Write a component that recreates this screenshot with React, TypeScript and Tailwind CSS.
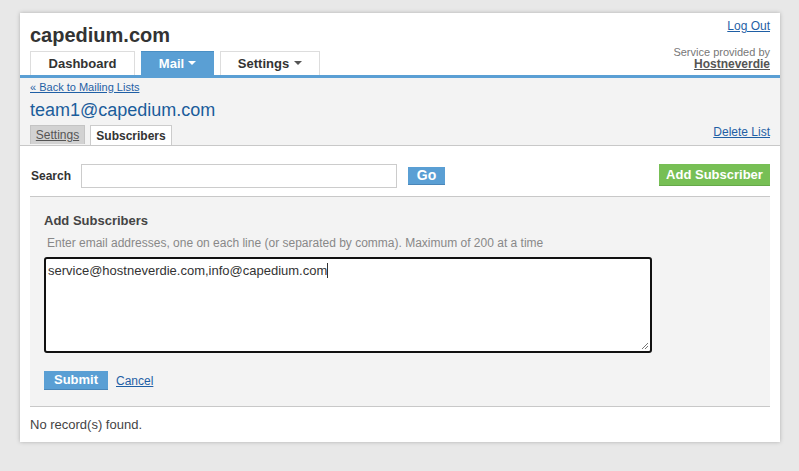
import React from "react";

const font = { fontFamily: '"Liberation Sans", Arial, sans-serif' };

export default function App() {
  return (
    <div className="min-h-[471px] w-[799px] bg-[#e8e8e8] pt-[13px] pl-[20px]" style={font}>
      <div className="w-[760px] h-[429px] bg-white shadow-[0_0_4px_rgba(0,0,0,0.25)] flex flex-col">
        {/* header */}
        <div className="flex justify-between px-[10px] pt-[10px] h-[62px]">
          <div className="flex flex-col">
            <div className="text-[20px] leading-[24px] font-bold text-[#333] h-[28px]">capedium.com</div>
            <div className="flex gap-[6px] h-[24px]">
              <div className="w-[105px] border border-[#ddd] border-b-0 flex items-center justify-center text-[13px] font-bold text-[#333]">Dashboard</div>
              <div className="w-[73px] bg-[#5a9fd4] border-t border-[#4a8fc4] flex items-center justify-center text-[13px] font-bold text-white gap-[4px]">
                Mail
                <svg width="8" height="5" viewBox="0 0 8 5"><path d="M0 0h8L4 4z" fill="#fff" /></svg>
              </div>
              <div className="w-[100px] border border-[#ddd] border-b-0 flex items-center justify-center text-[13px] font-bold text-[#333] gap-[5px]">
                Settings
                <svg width="8" height="5" viewBox="0 0 8 5"><path d="M0 0h8L4 4z" fill="#555" /></svg>
              </div>
            </div>
          </div>
          <div className="flex flex-col items-end -mt-[4px]">
            <a className="text-[12px] leading-[14px] text-[#1f5fa5] underline">Log Out</a>
            <div className="text-[11px] leading-[12px] text-[#777] mt-[13px]">Service provided by</div>
            <a className="text-[12px] leading-[13px] font-bold text-[#555] underline">Hostneverdie</a>
          </div>
        </div>
        <div className="h-[3px] bg-[#5a9fd4]" />
        {/* gray sub header */}
        <div className="bg-[#f3f3f3] border-b border-[#c8c8c8] px-[10px] pt-[3px] h-[68px] flex flex-col">
          <a className="text-[11px] leading-[13px] text-[#1f5fa5] underline">« Back to Mailing Lists</a>
          <div className="text-[18px] leading-[22px] text-[#1b5d9b] mt-[5px]">team1@capedium.com</div>
          <div className="flex justify-between items-end mt-[4px]">
            <div className="flex gap-[5px] items-end">
              <div className="w-[55px] h-[19px] bg-[#d2d2d2] border border-[#c4c4c4] border-b-0 flex items-center justify-center text-[12px] text-[#555] underline">Settings</div>
              <div className="w-[82px] h-[20px] bg-white border border-[#ccc] border-b-0 flex items-center justify-center text-[12px] font-bold text-[#333] -mb-[1px]">Subscribers</div>
            </div>
            <a className="text-[12px] leading-[14px] text-[#1f5fa5] underline mb-[5px]">Delete List</a>
          </div>
        </div>
        {/* content */}
        <div className="px-[10px] flex flex-col">
          <div className="flex items-start h-[51px] border-b border-[#c8c8c8] pt-[18px]">
            <div className="text-[12px] leading-[24px] font-bold text-[#333] w-[51px] pl-[1px]">Search</div>
            <div className="w-[316px] h-[24px] border border-[#ccc] bg-white" />
            <div className="ml-[11px] mt-[3px] w-[37px] h-[18px] bg-[#5a9fd4] border-b border-[#4a86b8] flex items-center justify-center text-[14px] font-bold text-white">Go</div>
            <div className="ml-auto w-[111px] h-[22px] bg-[#77bf55] border-b border-[#66a84a] flex items-center justify-center text-[13px] font-bold text-white">Add Subscriber</div>
          </div>
          <div className="bg-[#f3f3f3] border-b border-[#c8c8c8] h-[210px] px-[14px] pt-[16px] flex flex-col">
            <div className="text-[13px] leading-[15px] font-bold text-[#444]">Add Subscribers</div>
            <div className="text-[12px] leading-[14px] text-[#888] mt-[8px] pl-[3px]">Enter email addresses, one on each line (or separated by comma). Maximum of 200 at a time</div>
            <div className="relative mt-[7px] w-[608px] h-[96px] border-[2px] border-[#111] rounded-[3px] bg-white px-[2px] pt-[4px] text-[13px] leading-[15px] text-[#333]">
              <span>service@hostneverdie.com,info@capedium.com</span>
              <span className="inline-block w-[1px] h-[15px] bg-[#333] align-top" />
              <svg className="absolute right-[1px] bottom-[1px]" width="8" height="8" viewBox="0 0 8 8">
                <path d="M7 1L1 7M7 4L4 7" stroke="#777" strokeWidth="1" />
              </svg>
            </div>
            <div className="flex items-center mt-[18px] gap-[8px]">
              <div className="w-[64px] h-[19px] bg-[#5a9fd4] border-b border-[#4a86b8] flex items-center justify-center text-[13px] font-bold text-white">Submit</div>
              <a className="text-[12px] text-[#1f5fa5] underline">Cancel</a>
            </div>
          </div>
          <div className="text-[13px] leading-[14px] text-[#444] mt-[11px]">No record(s) found.</div>
        </div>
      </div>
    </div>
  );
}
